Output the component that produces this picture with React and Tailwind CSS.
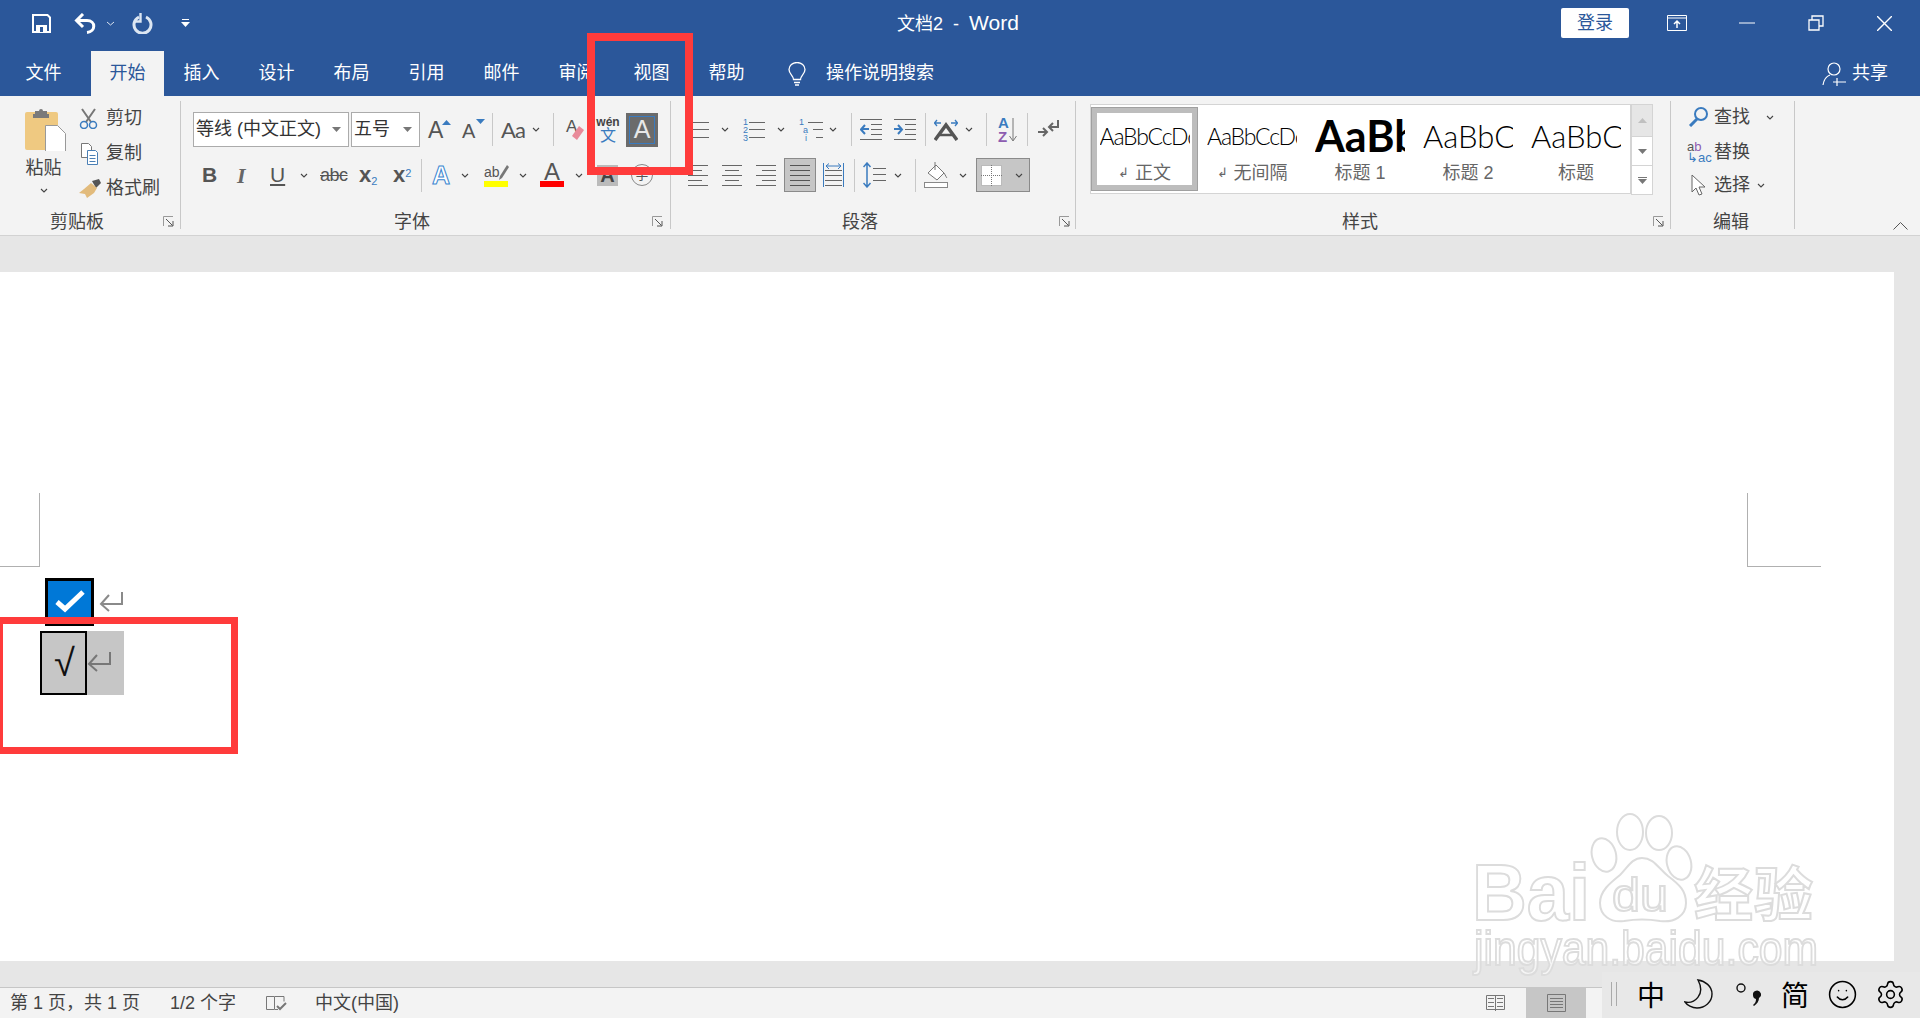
import React from "react";
import { Settings, Smile } from "lucide-react";

const Ic = ({ w, h, className, children }) => (
  <svg width={w} height={h} viewBox={`0 0 ${w} ${h}`} fill="none" className={`shrink-0 ${className || ""}`}>
    {children}
  </svg>
);

const Chev = ({ className }) => (
  <Ic w={8} h={5} className={className}>
    <path d="M1 1l3 3 3-3" stroke="#444" strokeWidth="1.1" />
  </Ic>
);

const Sep = ({ className }) => <div className={`w-px h-[33px] shrink-0 bg-[#c8c8c8] ${className || ""}`} />;

const Launcher = ({ className }) => (
  <Ic w={11} h={11} className={className}>
    <path d="M.5 10V.5H10" stroke="#999" />
    <path d="M3 3l6.5 6.5M5 10h5V5" stroke="#555" />
  </Ic>
);

// little stack of horizontal rules, used by all the paragraph buttons
const Lines = ({ w, h, rows, color = "#666", className, children }) => (
  <Ic w={w} h={h} className={className}>
    {rows.map((r, i) => (
      <path key={i} d={`M${r[0]} ${r[2]}.5H${r[1]}`} stroke={color} />
    ))}
    {children}
  </Ic>
);

const Tri = ({ up, color = "#777", className }) => (
  <Ic w={9} h={5} className={className}>
    <path d={up ? "M0 5L4.5 0 9 5z" : "M0 0h9L4.5 5z"} fill={color} />
  </Ic>
);

const Tab = ({ children, className }) => (
  <div className={`w-[75px] text-center text-white ${className || ""}`}>{children}</div>
);

const Group = ({ label, labelClass, launcher, launcherClass, className, children }) => (
  <div className={`h-[128px] mt-[5px] shrink-0 flex flex-col border-r border-[#c8c8c8] ${className}`}>
    <div className="h-[112px]">{children}</div>
    <div className="h-[16px] flex items-center text-[18px]">
      <span className={`mt-[2px] leading-[18px] ${labelClass}`}>{label}</span>
      {launcher && <Launcher className={`ml-auto ${launcherClass}`} />}
    </div>
  </div>
);

const Style = ({ sample, sampleClass, label, mark, className }) => (
  <div className={`h-[84px] mt-[2px] pt-[4px] flex flex-col items-center shrink-0 ${className || "w-[108px]"}`}>
    <div className={`w-[90px] h-[50px] flex items-center overflow-hidden whitespace-nowrap text-black ${sampleClass}`}>
      {sample}
    </div>
    <div className="mt-[1px] h-[22px] flex items-center text-[18px] text-[#666]">
      {mark && <span className="text-[13px] mr-[6px]">↲</span>}
      {label}
    </div>
  </div>
);

const ReturnMark = ({ color, className }) => (
  <Ic w={24} h={21} className={className}>
    <path d="M23 1v12H2M10 4l-8 9 8 7" stroke={color} strokeWidth="2" />
  </Ic>
);

function TitleBar() {
  return (
    <div className="h-[51px] pb-[5px] flex items-center text-white">
      <Ic w={19} h={19} className="ml-[32px]">
        <path d="M1 1h14.500l2.500 2.500V18H1z" stroke="#fff" strokeWidth="2" />
        <path d="M4 11h11v7H4z" fill="#fff" />
        <path d="M8 13h3v5H8z" fill="#2b579a" />
      </Ic>
      <Ic w={22} h={21} className="ml-[23px]">
        <path d="M9 1L2.500 7.500 9 14" stroke="#fff" strokeWidth="3" />
        <path d="M3 7.500h10c9 0 9 11 0 12" stroke="#fff" strokeWidth="3" />
      </Ic>
      <Ic w={9} h={5} className="ml-[10px]">
        <path d="M1 1l3.500 3L8 1" stroke="#dce4f0" />
      </Ic>
      <Ic w={21} h={21} className="ml-[17px]">
        <path d="M7 4a8.500 8.500 0 1 0 7 0" stroke="#dce6f2" strokeWidth="3" />
        <path d="M8.500 0v8.500H2" stroke="#dce6f2" strokeWidth="2.400" />
      </Ic>
      <Ic w={9} h={9} className="ml-[28px]">
        <path d="M1 .5h7" stroke="#fff" />
        <path d="M0 3h9L4.500 8z" fill="#fff" />
      </Ic>
      <div className="ml-[707px] w-[124px] whitespace-nowrap text-[18px] leading-[24px]">
        文档2&nbsp; -&nbsp; <span className="text-[21px]">Word</span>
      </div>
      <button className="ml-auto w-[68px] h-[30px] bg-white rounded-[2px] text-[18px] text-[#2b579a]">登录</button>
      <Ic w={20} h={16} className="ml-[38px]">
        <path d="M.5.500h19v15H.5zM0 3h20" stroke="#fff" />
        <path d="M10 13V6M7 9l3-3 3 3" stroke="#fff" strokeWidth="1.500" />
      </Ic>
      <Ic w={16} h={2} className="ml-[52px]">
        <path d="M0 1h16" stroke="#fff" />
      </Ic>
      <Ic w={16} h={16} className="ml-[53px]">
        <path d="M1 5h10v10H1zM4 5V1h11v10h-4" stroke="#fff" strokeWidth="1.300" />
      </Ic>
      <Ic w={15} h={15} className="ml-[53px] mr-[28px]">
        <path d="M0 0l15 15M15 0L0 15" stroke="#fff" strokeWidth="1.400" />
      </Ic>
    </div>
  );
}

function TabRow() {
  return (
    <div className="h-[45px] flex items-center text-[18px]">
      <Tab className="w-[87px]">文件</Tab>
      <div className="ml-[4px] w-[73px] h-full bg-[#f3f3f3] text-[#2b579a] flex items-center justify-center">开始</div>
      <Tab>插入</Tab>
      <Tab>设计</Tab>
      <Tab>布局</Tab>
      <Tab>引用</Tab>
      <Tab>邮件</Tab>
      <Tab>审阅</Tab>
      <Tab>视图</Tab>
      <Tab>帮助</Tab>
      <Ic w={18} h={24} className="ml-[24px]">
        <path d="M5.500 17.500c0-4-4.500-5.500-4.500-10a8 7 0 0 1 16 0c0 4.500-4.500 6-4.500 10z" stroke="#fff" strokeWidth="1.300" />
        <path d="M6 20.500h6M7 23h4" stroke="#fff" strokeWidth="1.400" />
      </Ic>
      <span className="ml-[20px] text-white">操作说明搜索</span>
      <Ic w={24} h={24} className="ml-auto">
        <circle cx="12" cy="7" r="6" stroke="#fff" strokeWidth="1.200" />
        <path d="M1 23c1-6 4-9 7-10M15 16v8M11 20h13" stroke="#fff" strokeWidth="1.200" />
      </Ic>
      <span className="ml-[6px] mr-[32px] text-white">共享</span>
    </div>
  );
}

function ClipboardGroup() {
  return (
    <Group label="剪贴板" labelClass="ml-[50px]" launcher launcherClass="mr-[6px]" className="w-[181px]">
      <div className="flex">
        <div className="ml-[25px] w-[42px] pt-[6px] flex flex-col items-center">
          <Ic w={42} h={44}>
            <rect x="0" y="5" width="33" height="38" rx="2" fill="#efc981" />
            <path d="M10 7V4h4a2 2 0 0 1 4 0h4v3h2v4H8V7z" fill="#7a7a7a" />
            <path d="M20.500 18.500h12l8 8v24h-20z" fill="#fff" stroke="#999" />
          </Ic>
          <span className="mt-[6px] mr-[5px] text-[18px] leading-[22px]">粘贴</span>
          <Chev className="mt-[9px] mr-[5px]" />
        </div>
        <div className="ml-[11px] pt-[1px] flex flex-col gap-[2px] text-[18px]">
          <div className="h-[33px] flex items-center">
            <Ic w={24} h={21}>
              <path d="M4 1l9 13M17 1L8 14" stroke="#777" strokeWidth="2" />
              <circle cx="6" cy="17" r="3.500" stroke="#3a7bbf" strokeWidth="1.500" />
              <circle cx="15" cy="17" r="3.500" stroke="#3a7bbf" strokeWidth="1.500" />
            </Ic>
            <span className="ml-[4px]">剪切</span>
          </div>
          <div className="h-[33px] flex items-center">
            <Ic w={24} h={22}>
              <path d="M3.500.500h7l3 3v11h-10z" stroke="#777" fill="#fff" />
              <path d="M9.500 7.500h8l2 2v12h-10z" stroke="#4a7fb5" fill="#fff" />
              <path d="M11.500 12.500h6M11.500 15.500h6M11.500 18.500h6" stroke="#4a7fb5" />
            </Ic>
            <span className="ml-[4px]">复制</span>
          </div>
          <div className="h-[33px] flex items-center">
            <Ic w={24} h={20}>
              <path d="M14 2l7-2 2 4-5 5z" fill="#555" />
              <path d="M13 4l6 5-3 5-7 5-2-4-6-1 5-4z" fill="#e2bb7c" />
            </Ic>
            <span className="ml-[4px]">格式刷</span>
          </div>
        </div>
      </div>
    </Group>
  );
}

function FontGroup() {
  return (
    <Group label="字体" labelClass="ml-[213px]" launcher launcherClass="mr-[7px]" className="w-[490px]">
      <div className="pt-[11px] h-[46px] flex items-center text-[#555]">
        <div className="ml-[12px] w-[156px] h-[35px] bg-white border border-[#ababab] flex items-center pl-[2px] text-[18px] text-[#333]">
          等线 (中文正文)
          <Tri className="ml-auto mr-[7px]" />
        </div>
        <div className="ml-[2px] w-[69px] h-[35px] bg-white border border-[#ababab] flex items-center pl-[2px] text-[18px] text-[#333]">
          五号
          <Tri className="ml-auto mr-[7px]" />
        </div>
        <div className="ml-[8px] w-[20px] flex items-start text-[23px] leading-[24px]">
          A<Tri up color="#3a7bbf" className="mt-[2px] -ml-[1px]" />
        </div>
        <div className="ml-[14px] w-[20px] flex items-start text-[20px] leading-[24px]">
          <span className="mt-[2px]">A</span>
          <Tri color="#3a7bbf" className="mt-[2px] ml-[1px]" />
        </div>
        <Sep className="ml-[10px]" />
        <span className="ml-[8px] w-[25px] text-[22px] tracking-[-1px] font-['Lato',sans-serif]">Aa</span>
        <Chev className="ml-[6px]" />
        <Sep className="ml-[13px]" />
        <div className="ml-[12px] w-[20px] h-[24px] flex items-start text-[17px] leading-[18px]">
          A
          <Ic w={12} h={16} className="mt-[8px] -ml-[5px]">
            <path d="M7 0l5 4-7 10-5-4z" fill="#e98a99" />
          </Ic>
        </div>
        <div className="ml-[12px] w-[20px] flex flex-col items-center leading-none">
          <span className="text-[12px] font-bold text-[#444]">wén</span>
          <span className="text-[16px] text-[#3a7bbf]">文</span>
        </div>
        <div className="ml-[8px] w-[32px] h-[34px] p-[3px] bg-[#6b6b6b]">
          <div className="w-full h-full border border-[#3a7bbf] flex items-center justify-center text-[25px] text-[#e8e8e8]">A</div>
        </div>
      </div>
      <div className="mt-[11px] h-[34px] flex items-center text-[#555]">
        <span className="ml-[21px] w-[14px] text-[21px] font-bold">B</span>
        <span className="ml-[21px] w-[11px] text-[22px] italic font-bold font-['Liberation_Serif',serif] text-[#666]">I</span>
        <span className="ml-[22px] w-[13px] text-[21px] underline">U</span>
        <Chev className="ml-[17px]" />
        <span className="ml-[12px] w-[25px] text-[18px] line-through tracking-[-.5px]">abc</span>
        <span className="ml-[14px] w-[19px] text-[22px] font-bold leading-none whitespace-nowrap">
          x<sub className="text-[11px] font-normal text-[#3a7bbf]">2</sub>
        </span>
        <span className="ml-[15px] w-[19px] text-[22px] font-bold leading-none whitespace-nowrap">
          x<sup className="text-[11px] font-normal text-[#3a7bbf]">2</sup>
        </span>
        <Sep className="ml-[9px]" />
        <span className="ml-[10px] w-[19px] text-[25px] font-bold leading-none text-white [-webkit-text-stroke:1px_#3a86d0]">A</span>
        <Chev className="ml-[10px]" />
        <div className="ml-[15px] w-[24px] flex flex-col">
          <div className="flex items-center h-[17px] text-[14px]">
            ab
            <Ic w={10} h={15} className="-ml-[1px]">
              <path d="M8 0l2 2-7 11-3 2 1-4z" fill="#777" />
            </Ic>
          </div>
          <div className="h-[6px] bg-[#ffff00]" />
        </div>
        <Chev className="ml-[11px]" />
        <div className="ml-[13px] w-[24px] flex flex-col items-center">
          <span className="h-[18px] text-[24px] leading-[18px]">A</span>
          <div className="w-full h-[6px] bg-[#ff0000]" />
        </div>
        <Chev className="ml-[11px]" />
        <span className="ml-[14px] w-[21px] h-[21px] bg-[#bbbbbb] text-center text-[20px] leading-[21px] font-bold text-[#444]">A</span>
        <div className="ml-[13px] w-[22px] h-[22px] rounded-full border-[1.5px] border-[#888] flex items-center justify-center text-[13px]">字</div>
      </div>
    </Group>
  );
}

const num = "text-[9px] leading-[8px] text-[#3a7bbf]";

function ParagraphGroup() {
  return (
    <Group label="段落" labelClass="ml-[171px]" launcher launcherClass="mr-[5px]" className="w-[405px]">
      <div className="pt-[11px] h-[46px] flex items-center">
        <Lines w={16} h={20} className="ml-[22px]" rows={[[0, 16, 2], [0, 16, 9], [0, 16, 17]]} />
        <Chev className="ml-[12px]" />
        <div className="ml-[14px] w-[22px] h-[24px] flex items-center">
          <div className={`flex flex-col ${num}`}>
            <span>1</span>
            <span>2</span>
            <span>3</span>
          </div>
          <Lines w={16} h={20} className="ml-[1px]" rows={[[0, 16, 2], [0, 16, 9], [0, 16, 17]]} />
        </div>
        <Chev className="ml-[12px]" />
        <div className="ml-[14px] w-[22px] h-[24px] flex items-center">
          <div className={`flex flex-col ${num}`}>
            <span>1</span>
            <span className="ml-[4px]">a</span>
            <span className="ml-[6px]">i</span>
          </div>
          <Lines w={16} h={20} className="-ml-[1px]" rows={[[1, 16, 2], [6, 16, 9], [9, 16, 17]]} />
        </div>
        <Chev className="ml-[8px]" />
        <Sep className="ml-[14px]" />
        <Lines w={22} h={21} className="ml-[8px]" rows={[[0, 22, 0], [11, 22, 5], [11, 22, 10], [11, 22, 15], [0, 22, 20]]}>
          <path d="M9 10H2M5 6l-4 4.500L5 15" stroke="#3a7bbf" strokeWidth="2" />
        </Lines>
        <Lines w={23} h={21} className="ml-[11px]" rows={[[1, 23, 0], [12, 23, 5], [12, 23, 10], [12, 23, 15], [1, 23, 20]]}>
          <path d="M1 10h7M5 6l4 4.500L5 15" stroke="#3a7bbf" strokeWidth="2" />
        </Lines>
        <Sep className="ml-[9px]" />
        <Ic w={24} h={22} className="ml-[8px]">
          <path d="M1 21L12 6l11 15" stroke="#555" strokeWidth="3.500" />
          <path d="M6 16h12" stroke="#555" strokeWidth="2.500" />
          <path d="M1 4h6M3 1L.5 4 3 7M23 4h-6M21 1l2.500 3L21 7" stroke="#3a7bbf" strokeWidth="1.300" />
        </Ic>
        <Chev className="ml-[7px]" />
        <Sep className="ml-[13px]" />
        <div className="ml-[11px] w-[19px] flex items-center">
          <div className="flex flex-col text-[15px] font-bold leading-[14px]">
            <span className="text-[#3a7bbf]">A</span>
            <span className="text-[#8d5cb0]">Z</span>
          </div>
          <Ic w={8} h={24}>
            <path d="M4 0v22M.5 18L4 23l3.500-5" stroke="#777" />
          </Ic>
        </div>
        <Sep className="ml-[10px]" />
        <Ic w={21} h={20} className="ml-[10px]">
          <path d="M20 0v7h-8M15 3l-4 4 4 4" stroke="#666" strokeWidth="2" />
          <path d="M0 12h8M5 8l4 4-4 4" stroke="#666" strokeWidth="2" />
        </Ic>
      </div>
      <div className="mt-[11px] h-[34px] flex items-center">
        <Lines w={20} h={21} className="ml-[17px]" rows={[[0, 20, 0], [0, 14, 5], [0, 20, 10], [0, 14, 15], [0, 20, 20]]} />
        <Lines w={20} h={21} className="ml-[14px]" rows={[[0, 20, 0], [3, 17, 5], [0, 20, 10], [3, 17, 15], [0, 20, 20]]} />
        <Lines w={20} h={21} className="ml-[14px]" rows={[[0, 20, 0], [6, 20, 5], [0, 20, 10], [6, 20, 15], [0, 20, 20]]} />
        <div className="ml-[8px] w-[32px] h-[34px] bg-[#c6c6c6] border border-[#8a8a8a] flex items-center justify-center">
          <Lines w={20} h={21} color="#555" rows={[[0, 20, 0], [0, 20, 5], [0, 20, 10], [0, 20, 15], [0, 20, 20]]} />
        </div>
        <Lines w={21} h={24} className="ml-[7px]" rows={[[2, 19, 7], [2, 19, 12], [2, 19, 17], [2, 19, 22]]}>
          <path d="M.5 0v24M20.500 0v24M3 3h15M6 .5L3 3l3 3M15 .5L18 3l-3 3" stroke="#3a7bbf" />
        </Lines>
        <Sep className="ml-[10px]" />
        <Lines w={23} h={26} className="ml-[8px]" rows={[[10, 23, 6], [10, 23, 12], [10, 23, 18]]}>
          <path d="M4 1v24M.5 5L4 1l3.500 4M.5 21L4 25l3.500-4" stroke="#3a7bbf" strokeWidth="1.500" />
        </Lines>
        <Chev className="ml-[8px]" />
        <Sep className="ml-[13px]" />
        <Ic w={24} h={26} className="ml-[8px]">
          <path d="M4 11L12 3l8 8-7 7z" stroke="#777" fill="#fff" />
          <path d="M11 0v8M20 11c2 3 2 4 3 5" stroke="#777" />
          <rect x=".5" y="20.500" width="23" height="5" stroke="#888" fill="#fff" />
        </Ic>
        <Chev className="ml-[11px]" />
        <div className="ml-[9px] w-[54px] h-[34px] bg-[#c6c6c6] border border-[#8a8a8a] flex items-center pl-[4px]">
          <Ic w={21} h={21}>
            <rect width="21" height="21" fill="#fff" />
            <path d="M.5.500h20v20H.5zM10.500 0v21M0 10.500h21" stroke="#777" strokeDasharray="1 1" />
          </Ic>
          <Chev className="ml-[13px]" />
        </div>
      </div>
    </Group>
  );
}

function StylesGroup() {
  const thin = "font-['Lato',sans-serif] font-light";
  return (
    <Group label="样式" labelClass="ml-[266px]" launcher launcherClass="mr-[6px]" className="w-[595px]">
      <div className="ml-[14px] mt-[3px] flex">
        <div className="w-[541px] h-[90px] bg-white border border-[#d4d4d4] flex overflow-hidden">
          <Style
            sample="AaBbCcDc"
            sampleClass={`text-[23px] tracking-[-1.2px] ${thin}`}
            label="正文"
            mark
            className="w-[107px] shadow-[inset_0_0_0_1px_#a0a0a0,inset_0_0_0_6px_#bdbdbd]"
          />
          <Style sample="AaBbCcDc" sampleClass={`text-[23px] tracking-[-1.2px] ${thin}`} label="无间隔" mark />
          <Style sample="AaBb" sampleClass="text-[43px] font-['Lato',sans-serif] font-bold" label="标题 1" />
          <Style sample="AaBbC" sampleClass={`text-[31px] ${thin}`} label="标题 2" />
          <Style sample="AaBbC" sampleClass={`text-[31px] ${thin}`} label="标题" />
        </div>
        <div className="w-[22px] flex flex-col">
          <div className="h-[33px] bg-[#e6e6e6] border border-[#d4d4d4] flex items-center justify-center">
            <Tri up color="#c0c0c0" />
          </div>
          <div className="h-[29px] bg-white border border-t-0 border-[#d4d4d4] flex items-center justify-center">
            <Tri color="#777" />
          </div>
          <div className="h-[29px] bg-white border border-t-0 border-[#d4d4d4] flex flex-col items-center justify-center gap-[1px]">
            <div className="w-[9px] h-px bg-[#777]" />
            <Tri color="#777" />
          </div>
        </div>
      </div>
    </Group>
  );
}

function EditingGroup() {
  return (
    <Group label="编辑" labelClass="ml-[42px]" className="w-[124px]">
      <div className="text-[18px]">
        <div className="h-[32px] flex items-center ml-[17px]">
          <Ic w={22} h={20}>
            <circle cx="13" cy="7" r="6" stroke="#3a7bbf" strokeWidth="2" />
            <path d="M9 12l-7 7" stroke="#3a7bbf" strokeWidth="3" />
          </Ic>
          <span className="ml-[4px]">查找</span>
          <Chev className="ml-[16px]" />
        </div>
        <div className="mt-[3px] h-[32px] flex items-center ml-[16px]">
          <div className="w-[23px] flex flex-col text-[13px] leading-[11px]">
            <span>
              <span className="text-[#555]">a</span>
              <span className="text-[#8d5cb0]">b</span>
            </span>
            <span className="text-[#3a7bbf] whitespace-nowrap">↳ac</span>
          </div>
          <span className="ml-[4px]">替换</span>
        </div>
        <div className="mt-[1px] h-[32px] flex items-center ml-[20px]">
          <Ic w={19} h={22}>
            <path d="M1 1v17l4-4 3 7 3-1-3-7h6z" stroke="#666" fill="#fff" />
          </Ic>
          <span className="ml-[4px]">选择</span>
          <Chev className="ml-[7px]" />
        </div>
      </div>
    </Group>
  );
}

function Ribbon() {
  return (
    <div className="h-[140px] bg-[#f3f3f3] border-b border-[#d2d2d2] flex text-[#444]">
      <ClipboardGroup />
      <FontGroup />
      <ParagraphGroup />
      <StylesGroup />
      <EditingGroup />
      <div className="flex-1 flex items-end justify-end pr-[12px] pb-[5px]">
        <Ic w={15} h={8}>
          <path d="M.5 7.500L7.500.5l7 7" stroke="#555" />
        </Ic>
      </div>
    </div>
  );
}

function Page() {
  return (
    <div className="w-[1894px] bg-white">
      <div className="pt-[221px] pr-[73px] flex justify-between">
        <div className="w-[40px] h-[74px] border-r border-b border-[#b0b0b0]" />
        <div className="w-[74px] h-[74px] border-l border-b border-[#b0b0b0]" />
      </div>
      <div className="mt-[11px] ml-[45px] flex items-center">
        <div className="w-[49px] h-[48px] bg-[#0078d7] border-[3px] border-black flex items-center justify-center">
          <Ic w={32} h={24} className="-mt-[3px]">
            <path d="M3 13l8 7L29 3" stroke="#fff" strokeWidth="5" />
          </Ic>
        </div>
        <ReturnMark color="#8a8a8a" className="ml-[5px] mb-[2px]" />
      </div>
      <div className="mt-[5px] ml-[40px] w-[84px] h-[64px] bg-[#c6c6c6] flex items-center">
        <div className="w-[47px] h-full border-2 border-black flex items-center justify-center font-['DejaVu_Sans',sans-serif] text-[38px] font-light text-[#111] pl-[2px]">√</div>
        <ReturnMark color="#777" className="mb-[4px]" />
      </div>
    </div>
  );
}

function StatusBar() {
  return (
    <div className="h-[31px] bg-[#f3f3f3] border-t border-[#c6c6c6] flex items-center text-[18px] text-[#444]">
      <span className="ml-[10px] whitespace-pre">第 1 页，共 1 页</span>
      <span className="ml-[30px] whitespace-pre">1/2 个字</span>
      <Ic w={21} h={17} className="ml-[30px]">
        <path d="M.5 1.500h8v13h-8zM9 1.500h9v5M9 14.500h3" stroke="#777" />
        <path d="M11 11l3 3 6-6" stroke="#777" strokeWidth="2" />
      </Ic>
      <span className="ml-[28px]">中文(中国)</span>
      <Lines
        w={19}
        h={18}
        className="ml-auto"
        color="#777"
        rows={[[2, 8, 4], [2, 8, 8], [2, 8, 12], [11, 17, 4], [11, 17, 8], [11, 17, 12]]}
      >
        <path d="M.5 1.500h18v14H.5zM9.500 1v16" stroke="#777" />
      </Lines>
      <div className="ml-[21px] mr-[334px] w-[60px] self-stretch bg-[#c6c6c6] flex items-center justify-center">
        <Lines w={19} h={18} color="#777" rows={[[3, 16, 4], [3, 16, 7], [3, 16, 10], [3, 16, 13]]}>
          <path d="M.5.500h18v17H.5z" stroke="#777" />
        </Lines>
      </div>
    </div>
  );
}

function Ime() {
  return (
    <div className="absolute left-[1602px] top-[972px] w-[318px] h-[46px] bg-[#e8e8e8] flex items-center text-black pb-[2px]">
      <div className="ml-[9px] w-[6px] h-[24px] border-x border-[#aaaaaa]" />
      <span className="ml-[20px] text-[28px] font-['Noto_Sans_CJK_SC',sans-serif] leading-none">中</span>
      <Ic w={30} h={30} className="ml-[19px]">
        <path d="M14 1c7 1 14 6 14 14 0 8-7 14-15 14-5 0-10-3-12-6 9 2 21-7 13-22z" stroke="#111" strokeWidth="1.400" />
      </Ic>
      <Ic w={26} h={28} className="ml-[21px]">
        <circle cx="6" cy="8" r="4" stroke="#111" strokeWidth="1.400" />
        <path d="M18 15a4 4 0 1 1 6 3c0 3-2 6-5 8l-1-1c2-2 3-3 3-6a4 4 0 0 1-3-4z" fill="#111" />
      </Ic>
      <span className="ml-[20px] text-[28px] font-['Noto_Sans_CJK_SC',sans-serif] leading-none">简</span>
      <Smile size={31} strokeWidth={1.200} className="ml-[18px]" />
      <Settings size={31} strokeWidth={1.200} className="ml-[17px]" />
    </div>
  );
}

// the baidu mark is burnt into the screenshot, outlined letters with a soft edge
function Watermark() {
  const ink = { stroke: "#dcdcdc", strokeWidth: 2, fill: "rgba(255,255,255,.6)" };
  return (
    <svg className="absolute left-[1460px] top-[810px] pointer-events-none blur-[.6px]" width="370" height="180" viewBox="1460 810 370 180">
      <ellipse cx="1630" cy="832" rx="13" ry="18" {...ink} />
      <ellipse cx="1659" cy="833" rx="13" ry="17" {...ink} />
      <ellipse cx="1604" cy="855" rx="12" ry="17" transform="rotate(-15 1604 855)" {...ink} />
      <ellipse cx="1679" cy="863" rx="12" ry="17" transform="rotate(-15 1679 863)" {...ink} />
      <path d="M1642 858c12 0 16 10 26 18 12 9 18 15 18 27 0 13-12 20-26 18-12-2-24-2-36 0-14 2-24-6-24-18 0-12 10-20 20-28 8-8 12-17 22-17z" {...ink} />
      <text x="1612" y="911" fontFamily="Liberation Sans" fontSize="46" textLength="56" lengthAdjust="spacingAndGlyphs" {...ink}>du</text>
      <text x="1472" y="920" fontFamily="Liberation Sans" fontWeight="700" fontSize="80" textLength="118" lengthAdjust="spacingAndGlyphs" {...ink}>Bai</text>
      <text x="1694" y="916" fontFamily="Noto Sans CJK SC" fontWeight="700" fontSize="59" textLength="119" {...ink}>经验</text>
      <text x="1474" y="965" fontFamily="Liberation Sans" fontSize="48" textLength="344" lengthAdjust="spacingAndGlyphs" {...ink}>jingyan.baidu.com</text>
    </svg>
  );
}

export default function App() {
  return (
    <div className="relative w-[1920px] h-[1018px] overflow-hidden flex flex-col bg-[#e6e6e6] font-['Liberation_Sans','Noto_Sans_CJK_SC',sans-serif]">
      <div className="bg-[#2b579a]">
        <TitleBar />
        <TabRow />
      </div>
      <Ribbon />
      <div className="h-[36px] shrink-0" />
      <div className="flex-1 flex">
        <Page />
      </div>
      <div className="h-[26px] shrink-0" />
      <StatusBar />

      <Ime />
      <Watermark />
      {/* annotation boxes drawn on the screenshot */}
      <div className="absolute left-[587px] top-[33px] w-[106px] h-[142px] border-[8px] border-[#ff3b3b]" />
      <div className="absolute -left-[4px] top-[617px] w-[242px] h-[137px] border-[7px] border-[#ff3b3b]" />
    </div>
  );
}
